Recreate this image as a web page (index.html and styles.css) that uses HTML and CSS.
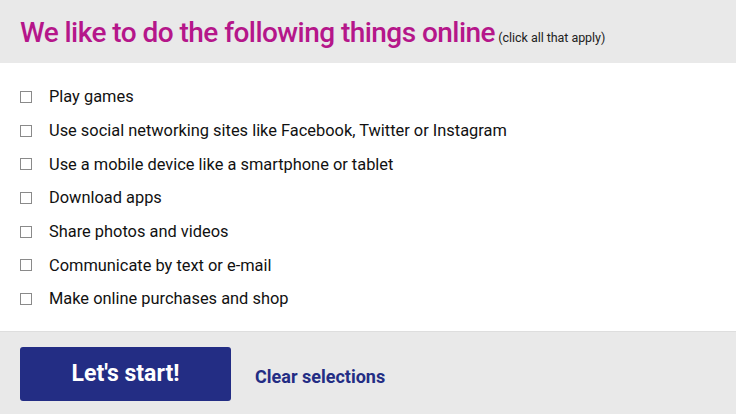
FILE: index.html
```html
<!DOCTYPE html>
<html lang="en">
<head>
    <meta charset="UTF-8">
    <meta name="viewport" content="width=device-width, initial-scale=1.0">
    <title>Online activities</title>
    <link rel="stylesheet" href="styles.css">
</head>
<body>

    <header class="survey-head">
        <h1>We like to do the following things online <small>(click all that apply)</small></h1>
    </header>

    <ul class="choices">
        <li><label><input type="checkbox"> Play games</label></li>
        <li><label><input type="checkbox"> Use social networking sites like Facebook, Twitter or Instagram</label></li>
        <li><label><input type="checkbox"> Use a mobile device like a smartphone or tablet</label></li>
        <li><label><input type="checkbox"> Download apps</label></li>
        <li><label><input type="checkbox"> Share photos and videos</label></li>
        <li><label><input type="checkbox"> Communicate by text or e-mail</label></li>
        <li><label><input type="checkbox"> Make online purchases and shop</label></li>
    </ul>

    <footer class="survey-foot">
        <button class="start-btn" type="button">Let's start!</button>
        <a class="clear-link" href="#">Clear selections</a>
    </footer>

</body>
</html>
```

FILE: styles.css
```css
body {
    font-family: Roboto, 'Liberation Sans', sans-serif;
    margin: 0;
    padding: 0;
    background-color: white;
    color: #111;
    height: 414px;
    display: flex;
    flex-direction: column;
    overflow: hidden;
}
.survey-head {
    background-color: #e9e9e9;
    height: 63px;
    padding: 0 20px;
    display: flex;
    align-items: center;
}
.survey-head h1 {
    margin: 2px 0 0;
    font-size: 28px;
    font-weight: 500;
    color: #b5168a;
    letter-spacing: -0.55px;
}
.survey-head small {
    font-size: 12.5px;
    font-weight: 400;
    color: #222;
    letter-spacing: -0.05px;
    margin-left: -3px;
}
.choices {
    list-style: none;
    margin: 0;
    padding: 17px 20px 0;
    flex: 1;
}
.choices li {
    height: 33.7px;
    display: flex;
    align-items: center;
}
.choices label {
    display: flex;
    align-items: center;
    font-size: 16.4px;
    cursor: pointer;
}
.choices input {
    appearance: none;
    width: 12px;
    height: 12px;
    margin: 0 17px 0 0;
    border: 1px solid #8a8a8a;
    background: white;
}
.survey-foot {
    background-color: #e9e9e9;
    border-top: 1px solid #dedede;
    height: 82px;
    padding: 0 20px;
    display: flex;
    align-items: center;
    gap: 24px;
}
.start-btn {
    width: 211px;
    height: 54px;
    background-color: #232d84;
    color: white;
    border: none;
    border-radius: 3px;
    font-family: inherit;
    font-size: 23px;
    font-weight: 700;
    margin-top: 1px;
}
.clear-link {
    color: #232d84;
    font-size: 18px;
    font-weight: 700;
    text-decoration: none;
    margin-top: 6px;
}
```
